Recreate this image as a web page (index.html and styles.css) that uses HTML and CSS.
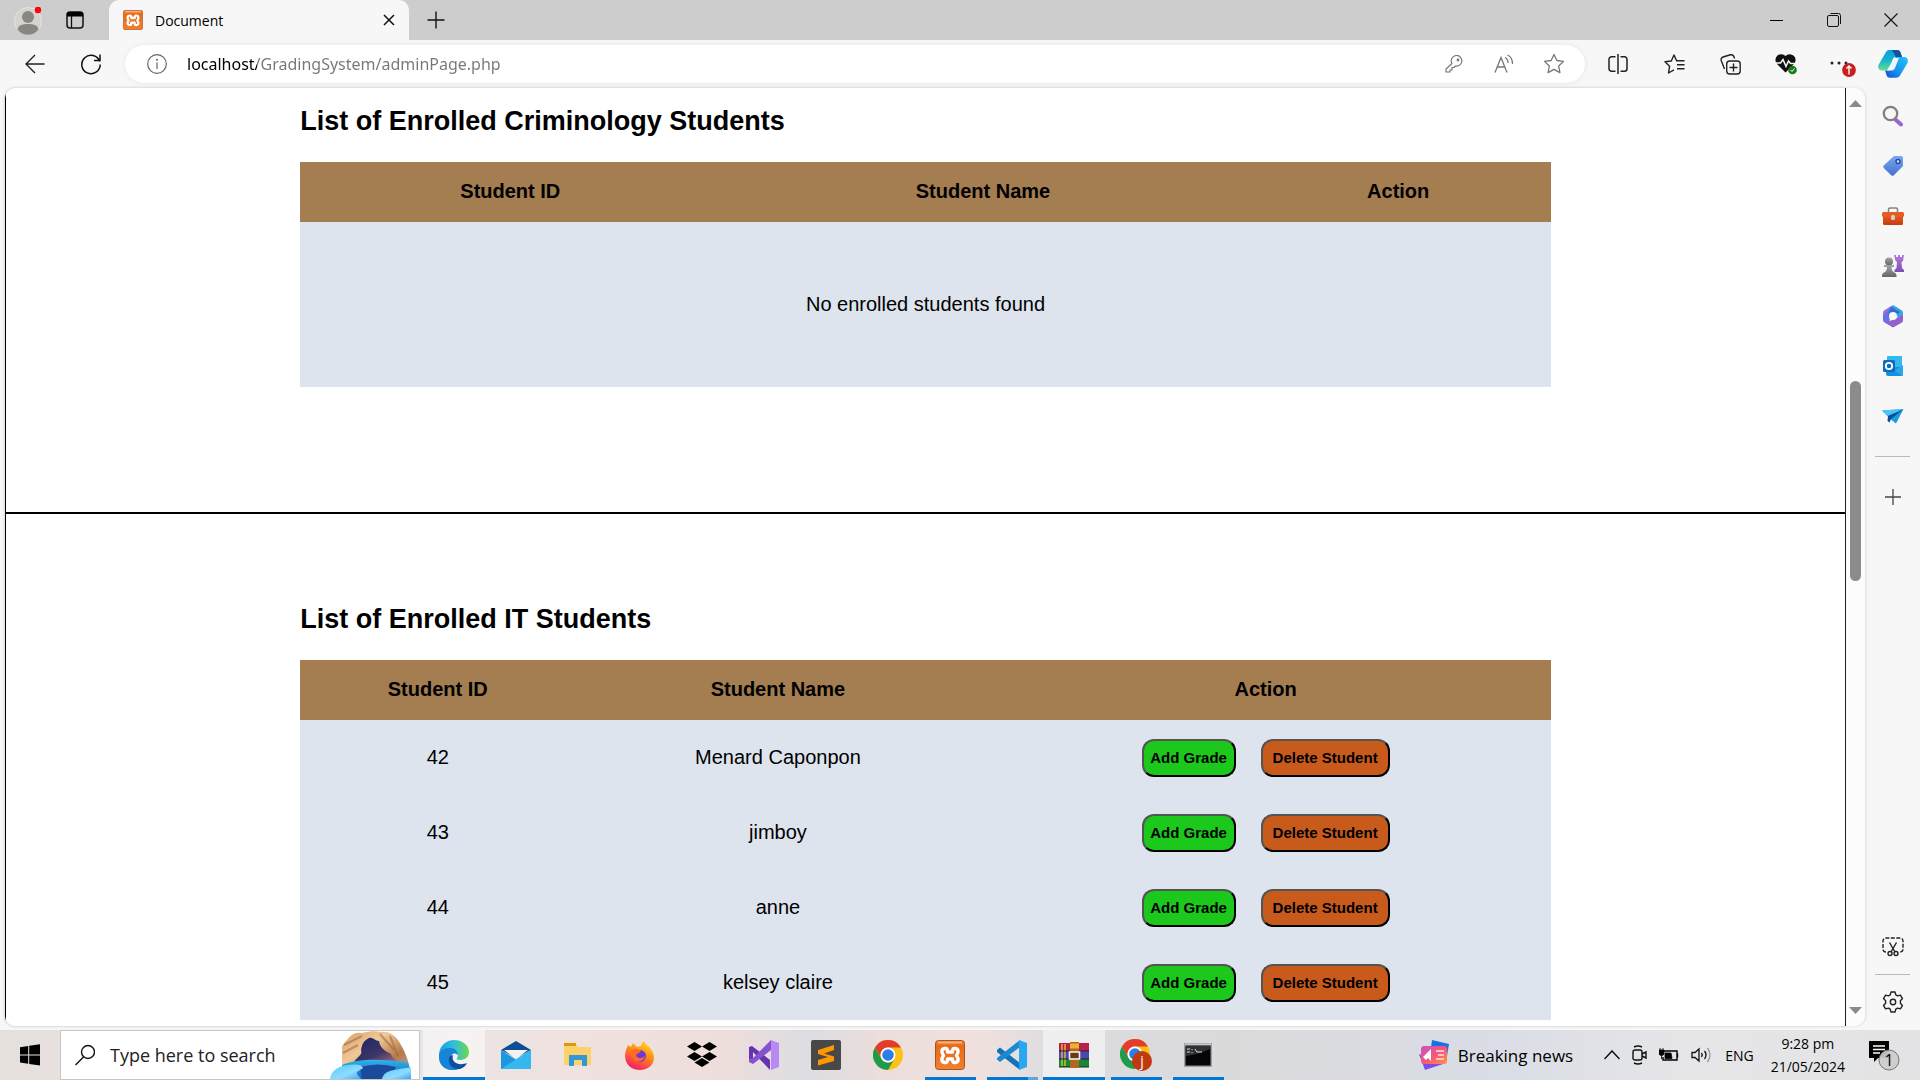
FILE: index.html
```html
<!DOCTYPE html>
<html lang="en">
<head>
<meta charset="utf-8">
<title>Document</title>
<link rel="stylesheet" href="styles.css">
</head>
<body>
<svg class="defs" aria-hidden="true">
  <defs>
    <linearGradient id="g-blue" x1="0" y1="0" x2="1" y2="1"><stop offset="0" stop-color="#35c1f1"/><stop offset="1" stop-color="#0a6fd0"/></linearGradient>
    <linearGradient id="g-edge" x1="0" y1="0" x2="1" y2="0"><stop offset="0" stop-color="#1b9de2"/><stop offset=".5" stop-color="#2fc0d8"/><stop offset="1" stop-color="#6ad94a"/></linearGradient>
    <linearGradient id="g-orange" x1="0" y1="0" x2="0" y2="1"><stop offset="0" stop-color="#f08030"/><stop offset=".2" stop-color="#ea6a16"/><stop offset="1" stop-color="#f08030"/></linearGradient>
    <linearGradient id="g-purple" x1="0" y1="0" x2="0" y2="1"><stop offset="0" stop-color="#b77be0"/><stop offset="1" stop-color="#7a4fb5"/></linearGradient>
    <linearGradient id="g-grey" x1="0" y1="0" x2="0" y2="1"><stop offset="0" stop-color="#a5a5a5"/><stop offset="1" stop-color="#666"/></linearGradient>
    <linearGradient id="g-tag" x1="0" y1="0" x2="0" y2="1"><stop offset="0" stop-color="#79aaf0"/><stop offset="1" stop-color="#4470cf"/></linearGradient>
    <linearGradient id="g-tool" x1="0" y1="0" x2="0" y2="1"><stop offset="0" stop-color="#f0662a"/><stop offset="1" stop-color="#c43c10"/></linearGradient>
    <linearGradient id="g-fox" x1=".8" y1="0" x2=".3" y2="1"><stop offset="0" stop-color="#ffe226"/><stop offset=".45" stop-color="#ff8a16"/><stop offset="1" stop-color="#f5156c"/></linearGradient>
    <linearGradient id="g-news" x1="0" y1="0" x2="1" y2="1"><stop offset="0" stop-color="#c455c8"/><stop offset=".5" stop-color="#f5567b"/><stop offset="1" stop-color="#ff9145"/></linearGradient>
    <linearGradient id="g-cop1" x1="0" y1="0" x2="0" y2="1"><stop offset="0" stop-color="#0d9de0"/><stop offset=".5" stop-color="#19b3cf"/><stop offset="1" stop-color="#66dc8c"/></linearGradient>
    <linearGradient id="g-cop2" x1="1" y1="0" x2="0" y2="1"><stop offset="0" stop-color="#27c3f5"/><stop offset=".6" stop-color="#168ff0"/><stop offset="1" stop-color="#1546d0"/></linearGradient>
    <linearGradient id="g-canyon" x1="0" y1="0" x2="1" y2="1"><stop offset="0" stop-color="#d9a066"/><stop offset=".35" stop-color="#f0c899"/><stop offset=".65" stop-color="#b87a46"/><stop offset="1" stop-color="#8ab0e8"/></linearGradient>
    <linearGradient id="g-cave" x1="0" y1="0" x2="1" y2="1"><stop offset="0" stop-color="#1b2566"/><stop offset=".6" stop-color="#3d3566"/><stop offset="1" stop-color="#a07080"/></linearGradient>
    <linearGradient id="g-water" x1="0" y1="0" x2="0" y2="1"><stop offset="0" stop-color="#2fb4ea"/><stop offset="1" stop-color="#1763b8"/></linearGradient>
    <linearGradient id="g-ice" x1="0" y1="0" x2="1" y2="1"><stop offset="0" stop-color="#52c8fa"/><stop offset=".6" stop-color="#8edcff"/><stop offset="1" stop-color="#3aa5ee"/></linearGradient>
    <symbol id="xampp" viewBox="0 0 30 30">
      <rect x=".5" y=".5" width="29" height="29" rx="3" fill="url(#g-orange)" stroke="#a8551c"/>
      <path d="M3 2.500h24" stroke="#f5b183" stroke-width="2"/>
      <path d="M9.500 8.500C12 8 12.500 9 12.500 12H17.500C17.500 9 18 8 20.500 8.500C23.500 9 24 12 21.500 15.500C24 19 23.500 22 20.500 22.500C18 23 17.500 22 17.500 19H12.500C12.500 22 12 23 9.500 22.500C6.500 22 6 19 8.500 15.500C6 12 6.500 9 9.500 8.500z" fill="none" stroke="#fff" stroke-width="3.400" stroke-linejoin="round"/>
    </symbol>
    <symbol id="chrome" viewBox="0 0 30 30">
      <circle cx="15" cy="15" r="15" fill="#fbc116"/>
      <path d="M2 7.500A15 15 0 0 1 28 7.500H15A7.500 7.500 0 0 0 8.500 18.800z" fill="#e33b2e"/>
      <path d="M2 7.500 8.500 18.700A7.500 7.500 0 0 0 21.500 18.800L15 30A15 15 0 0 1 2 7.500z" fill="#229a4c"/>
      <circle cx="15" cy="15" r="7.500" fill="#fff"/><circle cx="15" cy="15" r="5.800" fill="#2b7de9"/>
    </symbol>
  </defs>
</svg>

<header class="tabbar">
  <button class="avatar" aria-label="Profile">
    <svg width="28" height="30" viewBox="0 0 28 30"><circle cx="14" cy="16" r="13.500" fill="#d5d3cf" stroke="#e6e4e0"/><circle cx="14" cy="12" r="6" fill="#8a8682"/><path d="M3.500 24.500C4 20.500 8 19 14 19s10 1.500 10.500 5.500A13 13 0 0 1 3.500 24.500z" fill="#8a8682"/><circle cx="24" cy="5" r="4" fill="#e81010" stroke="#f3dada"/></svg>
  </button>
  <button class="workspaces" aria-label="Tab actions">
    <svg width="18" height="18" viewBox="0 0 18 18"><rect x="1" y="1" width="16" height="16" rx="3" fill="none" stroke="#111" stroke-width="1.500"/><path d="M1 5.500V3a2 2 0 0 1 2-2h12a2 2 0 0 1 2 2v2.500z"/><path d="M5.500 5v12" stroke="#111" stroke-width="1.300"/></svg>
  </button>
  <div class="tab">
    <svg width="20" height="20"><use href="#xampp"/></svg>
    <span class="tab-title">Document</span>
    <button aria-label="Close tab"><svg width="12" height="12" viewBox="0 0 12 12"><path d="M1 1l10 10M11 1 1 11" stroke="#111" stroke-width="1.500"/></svg></button>
  </div>
  <button class="new-tab" aria-label="New tab"><svg width="18" height="18" viewBox="0 0 18 18"><path d="M9 .5v17M.5 9h17" stroke="#111" stroke-width="1.400"/></svg></button>
  <div class="window-controls">
    <button aria-label="Minimize"><svg width="13" height="13" viewBox="0 0 13 13"><path d="M0 6.500h13" stroke="#000"/></svg></button>
    <button aria-label="Restore"><svg width="14" height="14" viewBox="0 0 14 14" fill="none" stroke="#111"><rect x=".5" y="2.500" width="11" height="11" rx="1.500"/><path d="M3.500.5h8a2 2 0 0 1 2 2v8.500"/></svg></button>
    <button aria-label="Close"><svg width="14" height="14" viewBox="0 0 14 14"><path d="M.5.5l13 13M13.500.5l-13 13" stroke="#111" stroke-width="1.100"/></svg></button>
  </div>
</header>

<nav class="toolbar">
  <button aria-label="Back"><svg width="20" height="20" viewBox="0 0 20 20" fill="none" stroke="#222" stroke-width="1.400"><path d="M19.500 10H1M10 1 1 10l9 9"/></svg></button>
  <button aria-label="Refresh"><svg width="20" height="22" viewBox="0 0 20 22" fill="none" stroke="#111" stroke-width="1.500"><path d="M18.700 8.500A9.200 9.200 0 1 0 19.200 11.500M19 1.500v6h-6"/></svg></button>
  <div class="omnibox">
    <svg class="info" width="20" height="22" viewBox="0 0 20 22"><circle cx="10" cy="11" r="9.300" fill="none" stroke="#666" stroke-width="1.200"/><path d="M10 9.500v6.500" stroke="#666" stroke-width="1.200"/><circle cx="10" cy="6.800" r="1" fill="#666"/></svg>
    <input class="url" type="text" aria-label="Address" value="localhost/GradingSystem/adminPage.php">
    <button aria-label="Saved passwords"><svg width="18" height="18" viewBox="0 0 18 18" fill="none" stroke="#767676" stroke-width="1.200"><path d="M7 8.500A5.300 5.300 0 1 1 10.500 11L9 12.500H7V15H5v2H1v-3z" stroke-linejoin="round"/><circle cx="13" cy="5" r=".8" fill="#767676"/></svg></button>
    <button aria-label="Read aloud"><svg width="20" height="20" viewBox="0 0 20 20" fill="none" stroke="#767676" stroke-width="1.300"><path d="M1 18.500 7 3.500l6 15M3 13h8M11 3.500c2 1 3 3 3 5.500M13.500 1c3.500 1.500 5 5 5 9"/></svg></button>
    <button aria-label="Add to favorites"><svg width="22" height="22" viewBox="0 0 22 22" fill="none" stroke="#767676" stroke-width="1.300" stroke-linejoin="round"><path d="M11 1.500l2.900 6 6.600.9-4.800 4.600 1.200 6.600-5.900-3.200-5.900 3.200 1.200-6.600L1.500 8.400l6.600-.9z"/></svg></button>
  </div>
  <button aria-label="Split screen"><svg width="20" height="20" viewBox="0 0 20 20" fill="none" stroke="#222" stroke-width="1.500"><path d="M7.500 2.700H3.500a2.500 2.500 0 0 0-2.500 2.500v9.600a2.500 2.500 0 0 0 2.500 2.500h4M12.500 2.700h4A2.500 2.500 0 0 1 19 5.200v9.600a2.500 2.500 0 0 1-2.500 2.500h-4M10 0v20"/></svg></button>
  <button aria-label="Favorites"><svg width="21" height="20" viewBox="0 0 21 20" fill="none" stroke="#222" stroke-width="1.400" stroke-linejoin="round"><path d="M12.500 6.500 10 1 7.300 7 1 7.800l4.600 4.500L4.500 19l5.500-3.200M12 6.700h8.500M13 10.700h7.500M13 14.700h7.500"/></svg></button>
  <button aria-label="Collections"><svg width="21" height="21" viewBox="0 0 21 21" fill="none" stroke="#222" stroke-width="1.400"><rect x="6.700" y="7" width="13.500" height="13" rx="3"/><path d="M13.500 9.500v8M9.500 13.500h8M4.500 15 1.200 6.500A3 3 0 0 1 3 3l7.500-2.200a3 3 0 0 1 3.500 2L14.500 4.500"/></svg></button>
  <button aria-label="Browser essentials"><svg width="22" height="22" viewBox="0 0 22 22"><path d="M10.500 19.500 2 11A5.500 5.500 0 0 1 10.500 3a5.500 5.500 0 0 1 8.500 8z" fill="#111"/><path d="M.5 10h5L8 6.500l3 7L13.500 8l2 2.500H21" fill="none" stroke="#f7f7f7" stroke-width="1.500"/><circle cx="17.500" cy="17" r="4.300" fill="#177a17"/><path d="M15.500 17l1.500 1.500 2.500-3" fill="none" stroke="#fff"/></svg></button>
  <button aria-label="Settings and more"><svg width="28" height="26" viewBox="0 0 28 26"><g fill="#222"><circle cx="4" cy="12" r="1.500"/><circle cx="11" cy="12" r="1.500"/><circle cx="18" cy="12" r="1.500"/></g><circle cx="21" cy="19" r="6.900" fill="#c8201f"/><path d="M21 23.500v-8M18.500 17.500 21 15l2.500 2.500" fill="none" stroke="#fff" stroke-width="1.400"/></svg></button>
  <button class="copilot" aria-label="Copilot"><svg width="30" height="28" viewBox="0 0 30 28"><path d="M8 2c1-1.500 2-2 4-2h7c2 0 3 1 3.500 2.500L24 7h-6c-2 0-3 1-3.500 3l-2 7c-1 3-2 3.500-4 3.500H4C1 20.500-.5 18 .5 15z" fill="url(#g-cop1)"/><path d="M14 0h5c2 0 3 1 3.500 2.500L24 7h-6z" fill="#16529a"/><path d="M22 25.500c-1 1.800-2 2.200-4 2.200h-6c-2 0-3-1-3.500-2.700L7 20.500h3c2 0 3-1 3.500-3l2-7.500c1-2.500 2-3 4-3H26c3.500 0 4.500 2.500 3.500 6z" fill="url(#g-cop2)"/><path d="M16 8h5l-4 10c-1 2-2 2.500-4 2.500h-4z" fill="#fff" opacity=".9"/></svg></button>
</nav>

<div class="browser-body">
  <main class="page">
    <section class="course course-first">
      <h2>List of Enrolled Criminology Students</h2>
      <table class="students criminology">
        <thead><tr><th>Student ID</th><th>Student Name</th><th>Action</th></tr></thead>
        <tbody><tr class="empty"><td colspan="3">No enrolled students found</td></tr></tbody>
      </table>
    </section>
    <section class="course">
      <h2>List of Enrolled IT Students</h2>
      <table class="students it">
        <thead><tr><th>Student ID</th><th>Student Name</th><th>Action</th></tr></thead>
        <tbody>
          <tr><td>42</td><td>Menard Caponpon</td><td><div class="actions"><button class="add">Add Grade</button><button class="delete">Delete Student</button></div></td></tr>
          <tr><td>43</td><td>jimboy</td><td><div class="actions"><button class="add">Add Grade</button><button class="delete">Delete Student</button></div></td></tr>
          <tr><td>44</td><td>anne</td><td><div class="actions"><button class="add">Add Grade</button><button class="delete">Delete Student</button></div></td></tr>
          <tr><td>45</td><td>kelsey claire</td><td><div class="actions"><button class="add">Add Grade</button><button class="delete">Delete Student</button></div></td></tr>
        </tbody>
      </table>
    </section>
  </main>
  <div class="scrollbar">
    <svg width="13" height="7" viewBox="0 0 13 7"><path d="M6.500 0 13 7H0z" fill="#8b8b8b"/></svg>
    <div class="track"><div class="thumb"></div></div>
    <svg width="13" height="7" viewBox="0 0 13 7"><path d="M0 0h13L6.500 7z" fill="#8b8b8b"/></svg>
  </div>
  <aside class="sidebar">
    <button aria-label="Search"><svg width="22" height="22" viewBox="0 0 22 22"><path d="M14 15l5 4.500" stroke="#9a64cf" stroke-width="4" stroke-linecap="round"/><circle cx="8.500" cy="8.500" r="6.700" fill="none" stroke="#808080" stroke-width="2.300"/></svg></button>
    <button aria-label="Shopping"><svg width="22" height="22" viewBox="0 0 22 22"><path d="M12 1h7a2 2 0 0 1 2 2v8l-9 9a2 2 0 0 1-3 0L1.700 13a2 2 0 0 1 0-2.500z" fill="url(#g-tag)"/><circle cx="16" cy="6.500" r="2" fill="#cfe0ff" stroke="#2a4690" stroke-width="1.400"/></svg></button>
    <button aria-label="Tools"><svg width="22" height="20" viewBox="0 0 22 20"><path d="M6.500 7V3.500a1.500 1.500 0 0 1 1.500-1.500h6a1.500 1.500 0 0 1 1.500 1.500V7" fill="none" stroke="#858585" stroke-width="1.600"/><rect x="1" y="6" width="20" height="13" rx="1.500" fill="url(#g-tool)"/><rect x="0" y="6" width="22" height="5" rx="1.500" fill="#e85c22"/><rect x="9" y="9" width="4" height="5" rx="1.500" fill="#d0d0d0"/></svg></button>
    <button aria-label="Games"><svg width="22" height="24" viewBox="0 0 22 24"><path d="M12 1h2v2h2V1h2v2h2V1h2l-1 6-1.500 1 .5 6 2 2v2h-9.500v-2l2-2 .5-6-1.500-1z" fill="url(#g-purple)"/><g fill="url(#g-grey)"><circle cx="7" cy="7.500" r="4"/><path d="M2 11h10v2H9.500c0 3 1 4.500 3 5.500 2 1 2 2 2 4.500H0c0-2.500 0-3.500 2-4.500s3-2.500 3-5.500H2z"/></g></svg></button>
    <button aria-label="Microsoft 365"><svg width="22" height="24" viewBox="0 0 22 24"><path d="M10 1.500q1-.7 2 0L20 6.500q1 1 1 2V15l-7-3-4-6z" fill="#38a4ea"/><path d="M10 1.500 2 6.500q-1 1-1 2v7q0 1.500 1 2.500l5 3V11z" fill="#9b72dc"/><path d="M10 1.500 8 7v10l-1 4-5-3q-1-1-1-2.500V12z" fill="#4a6fe0" opacity=".6"/><path d="M9 2.500 18 8l-4 3-8 1z" fill="#2f6fd4"/><path d="M21 11v5.500q0 1-1 2l-8 4.500q-1 .5-2 0L4 19l10-5z" fill="#9261cf"/><circle cx="11" cy="12" r="4" fill="#f7f7f7"/></svg></button>
    <button aria-label="Outlook"><svg width="22" height="22" viewBox="0 0 22 22"><rect x="5" y="1" width="15" height="12" rx="1" fill="#35b8f1"/><path d="M4 12h17v7a2 2 0 0 1-2 2H6a2 2 0 0 1-2-2z" fill="#1490df"/><path d="m21 10-9 6 9 5z" fill="#28a8ea"/><rect x="1" y="5" width="12" height="12" rx="1.500" fill="#0f6cbd"/><circle cx="7" cy="11" r="3.200" fill="none" stroke="#fff" stroke-width="1.800"/></svg></button>
    <button aria-label="Drop"><svg width="22" height="18" viewBox="0 0 22 18"><path d="M0 3.500 21.500 2 14 16.500l-5-4z" fill="#1c9be0"/><path d="M0 3.500 21.500 2 6 9z" fill="#4cc4f5"/><path d="M6 9l15-6.500L9 12l-1.500 3.500L5.500 14z" fill="#0a4e94"/></svg></button>
    <hr>
    <button aria-label="Customize"><svg width="16" height="16" viewBox="0 0 16 16"><path d="M8 0v16M0 8h16" stroke="#444" stroke-width="1.300"/></svg></button>
    <div class="sidebar-bottom">
      <button aria-label="Screenshot"><svg width="22" height="20" viewBox="0 0 22 20" fill="none" stroke="#222" stroke-width="1.400"><path d="M4 15a3 3 0 0 1-3-3V4a3 3 0 0 1 3-3h14a3 3 0 0 1 3 3v8a3 3 0 0 1-3 3" stroke-dasharray="4 1.500"/><path d="M7.500 5.500l5.500 9.500M14.500 5.500 9 15"/><circle cx="8" cy="16.500" r="2"/><circle cx="14" cy="16.500" r="2"/></svg></button>
      <hr>
      <button aria-label="Settings"><svg width="22" height="22" viewBox="0 0 22 22" fill="none" stroke="#222" stroke-width="1.400" stroke-linejoin="round"><path d="M9 1h4l.8 2.900 1.700 1 2.900-.8 2.100 3.500L18.400 9.800v2.400l2.100 2.200-2.100 3.500-2.900-.8-1.700 1L13 21H9l-.8-2.900-1.700-1-2.900.8-2.100-3.500 2.100-2.200V9.800L1.500 7.600l2.100-3.500 2.900.8 1.700-1z"/><circle cx="11" cy="11" r="2.700"/></svg></button>
    </div>
  </aside>
</div>

<footer class="taskbar">
  <button class="start" aria-label="Start"><svg width="20" height="22" viewBox="0 0 20 22"><path d="M0 3.200 8.200 2v8.400H0zM9.200 1.800 20 .3v10.100H9.200zM0 11.400h8.200v8.400L0 18.600zM9.200 11.400H20v10.100L9.200 20z"/></svg></button>
  <label class="search">
    <svg width="20" height="22" viewBox="0 0 20 22" fill="none" stroke="#111" stroke-width="1.400"><circle cx="13" cy="8" r="6.500"/><path d="M8.500 13 .5 21"/></svg>
    <input type="text" placeholder="Type here to search" aria-label="Search">
    <svg class="scene" width="82" height="48" viewBox="0 0 82 48"><path d="M12 40V15C18 8 22 0 32 2c8-2 14-2 20-1 8-1 12 4 16 8 5 8 10 17 12 30v9H12z" fill="url(#g-canyon)"/><path d="M14 14l18-9M13 22l15-8M50 3l14 16M60 5l8 20" stroke="#8f6038" stroke-width="2" opacity=".5"/><path d="M24 31c3-5 9-7 7-12 1-5 2-9 8-12 4-1 6 3 10 3 1 7 6 10 12 13 0 3 4 5 7 8z" fill="url(#g-cave)"/><path d="M12 34c14-6 40-7 66-2l3 8v8H12z" fill="url(#g-water)"/><path d="M30 36q18-5 36 0l-6 12H32z" fill="#1b4a9c"/><path d="M0 48c1-8 8-13 18-14 7-1 14-1 15 3-2 2-7 3-6 6l4 5z" fill="url(#g-ice)"/><path d="M52 48c1-5 5-8 12-9 8-1 13-3 17-2v11z" fill="url(#g-ice)"/></svg>
  </label>
  <div class="apps">
    <button class="running active" aria-label="Edge"><svg width="30" height="30" viewBox="0 0 30 30"><path d="M0 14C1 4 9 0 15 0c9 0 15 6 15 12 0 6-5 8-9 8-3 0-4-1-3-2 3-5-1-9-6-9C7 9 2 12 0 14z" fill="url(#g-edge)"/><path d="M0 14C3 9 7 8 11 8c5 0 8 3 8 7-4-4-9 0-7 6 1 4 4 7 8 8-2 1-5 1-8 1C3 29-1 22 0 14z" fill="#1685d8"/><path d="M11 16c-4 7 2 14 10 13 3-1 6-3 7-6-3 1-7 2-11 0-3-2-4-4-3-8z" fill="#0c4fa0"/></svg></button>
    <button aria-label="Mail"><svg width="30" height="30" viewBox="0 0 30 30"><path d="M0 10 15 1l15 9-15 8z" fill="#0d4f96"/><path d="M3 10h24l-12 9z" fill="#f2f2f2"/><path d="M0 10l15 9.500L30 10v19H0z" fill="#1e96e0"/><path d="M0 29 30 10v19z" fill="#35b8f0"/></svg></button>
    <button aria-label="File Explorer"><svg width="28" height="26" viewBox="0 0 28 26"><path d="M0 2h12l2 3h13v18H0z" fill="#fdd16a"/><path d="M0 1h12v3H0z" fill="#dd9a08"/><path d="M5 24V13h18v11h-5v-6h-8v6z" fill="#3498d8"/></svg></button>
    <button aria-label="Firefox"><svg width="30" height="30" viewBox="0 0 30 30"><path d="M1 10 3 5l3 2 2-4 4 4c2-1 4-1 4-1 0-2 1-4 3-5 1 4 9 6 10 16 0 8-6 13-14 13S-3 24 1 10z" fill="url(#g-fox)"/><circle cx="15" cy="16" r="6" fill="#7038d0"/><path d="M6 10c4-1 7-1 10 1-1 2-3 2-5 4 1 4 6 4 9 1-1 6-10 8-13 1z" fill="#ff6b22"/></svg></button>
    <button aria-label="Dropbox"><svg width="30" height="28" viewBox="0 0 30 28"><path d="M7.500 1 15 5.500 7.500 10 0 5.500zM22.500 1 30 5.500 22.500 10 15 5.500zM7.500 11l7.500 4.500L7.500 20 0 15.500zM22.500 11l7.500 4.500-7.500 4.500-7.500-4.500zM15 17l7.500 4.500L15 26l-7.500-4.500z"/></svg></button>
    <button aria-label="Visual Studio"><svg width="30" height="30" viewBox="0 0 30 30"><path d="M0 7l3-1 18 14v-5 15L4 12v7l-4 3z" fill="#6633b0"/><path d="M22 0v10L4 24l-4-2V19l4-1z" fill="#8652cf"/><path d="M22 0 30 3v24l-8 3z" fill="#b889f2"/></svg></button>
    <button aria-label="Sublime Text"><svg width="30" height="30" viewBox="0 0 30 30"><rect width="30" height="30" rx="2" fill="#484848"/><path d="M7 10 23 5v5l-10 3.500 10 3V21L7 25.500V20l10-3-10-3z" fill="#ff9800"/></svg></button>
    <button aria-label="Chrome"><svg width="30" height="30"><use href="#chrome"/></svg></button>
    <button class="running" aria-label="XAMPP"><svg width="30" height="30"><use href="#xampp"/></svg></button>
    <button class="running stacked" aria-label="Visual Studio Code"><svg width="30" height="30" viewBox="0 0 30 30"><path d="M0 10l3-2.500L23 23v7L0 12z" fill="#1273b8"/><path d="M0 19.500 3 22 23 7V0L0 18z" fill="#1c8ad0"/><path d="M22 0l8 3v24l-8 3z" fill="#28a8f0"/></svg></button>
    <button class="running hot" aria-label="WinRAR"><svg width="30" height="26" viewBox="0 0 30 26"><rect y="1" width="30" height="8" fill="#b8204a"/><rect y="9" width="30" height="8" fill="#4a48b0"/><rect y="17" width="30" height="8" fill="#148838"/><path d="M3 2v22M6 2v22" stroke="#e8c830" stroke-width="1.300"/><path d="M0 9h30M0 17h30M0 25h30" stroke="#222"/><rect x="11" width="9" height="26" fill="#b3671e"/><path d="M11 4h9" stroke="#f0b030" stroke-width="5"/><rect x="10.500" y="10" width="10" height="7" fill="#6b3b12" stroke="#eee" stroke-width="1.600"/></svg></button>
    <button class="running" aria-label="Chrome profile"><svg width="32" height="32" viewBox="0 0 32 32"><use href="#chrome" width="30" height="30"/><circle cx="22" cy="22" r="10" fill="#c0390f"/><text class="profile-letter" x="22" y="27" text-anchor="middle">j</text></svg></button>
    <button class="running" aria-label="Command Prompt"><svg width="28" height="24" viewBox="0 0 28 24"><rect x=".7" y=".7" width="26.600" height="22.600" fill="#050505" stroke="#9aa0a8" stroke-width="1.500"/><path d="M1 1.500h26" stroke="#c4c8cf" stroke-width="2"/><path d="M2 13Q12 12 26 6V3H2z" fill="#444" opacity=".7"/><path d="M3 6h3M3 9h3M8 6v1M8 9v1M11 6l2 3M13 9h5" stroke="#ddd"/></svg></button>
  </div>
  <div class="tray">
    <button class="news"><svg width="30" height="30" viewBox="0 0 30 30"><path d="M13 0 30 4l-3 18H10z" fill="#1673df"/><path d="M0 14l24 10-18 6z" fill="#7c4be8"/><rect x="2" y="6" width="26" height="18" rx="3" fill="url(#g-news)"/><path d="M4 17 12 9v12l-3-3-2 2z" fill="#fff"/><path d="M17 11h8M19 15h6M17 19h8" stroke="#ffe0e0" stroke-width="1.600"/></svg>Breaking news</button>
    <div class="tray-icons">
      <svg width="16" height="10" viewBox="0 0 16 10"><path d="M.5 9 8 1l7.500 8" fill="none" stroke="#111" stroke-width="1.500"/></svg>
      <svg width="15" height="20" viewBox="0 0 15 20" fill="none" stroke="#111" stroke-width="1.400"><rect x="1" y="5" width="9" height="10" rx="2"/><path d="M10 9l4-2v6l-4-2M2 2q4-2 8 0M2 18q4 2 8 0"/></svg>
      <svg width="20" height="14" viewBox="0 0 20 14"><path d="M5 3h13v9H4V9M18.500 5.500v4" fill="none" stroke="#000" stroke-width="1.400"/><path d="M6 5h6l1 5.500H6zM0 2h5v3a2.500 2.500 0 0 1-5 0zM1 0v2M4 0v2M2.500 6v5" stroke="#000" stroke-width=".8"/></svg>
      <svg width="22" height="18" viewBox="0 0 22 18" fill="none" stroke="#111" stroke-width="1.300"><path d="M1 6.500h3L8 3v12l-4-3.500H1zM10.500 7q1.500 2 0 4M13.500 5q3 4 0 8"/><path d="M16.500 2q5 7 0 14" stroke="#999"/></svg>
      <span>ENG</span>
    </div>
    <div class="clock"><time>9:28 pm</time><time>21/05/2024</time></div>
    <button class="notifications" aria-label="Notifications"><svg width="32" height="32" viewBox="0 0 32 32"><path d="M1 2h20v17H10l-4 4v-4H1z"/><path d="M5 7h12M5 10.500h12M5 14h7" stroke="#fff" stroke-width="1.400"/><circle cx="21" cy="21" r="10" fill="#ccc" fill-opacity=".92" stroke="#777"/><text class="count" x="21" y="27" text-anchor="middle">1</text></svg></button>
  </div>
</footer>
</body>
</html>
```
FILE: styles.css
```css
* {
  box-sizing: border-box;
}

body {
  margin: 0;
  height: 100vh;
  display: flex;
  flex-direction: column;
  overflow: hidden;
  background: #f7f7f7;
  color: #000;
  font-family: "Open Sans", "Noto Sans", sans-serif;
}

button {
  padding: 0;
  border: 0;
  background: none;
  color: inherit;
  font: inherit;
}

svg {
  display: block;
  flex: none;
}

.defs {
  position: absolute;
  width: 0;
  height: 0;
}

/* Tab strip */
.tabbar {
  flex: none;
  display: flex;
  align-items: center;
  height: 40px;
  background: #cdcdcd;
}

.tabbar button,
.toolbar button,
.sidebar button,
.apps button {
  display: grid;
  place-items: center;
}

.avatar {
  width: 56px;
}

.workspaces {
  width: 38px;
}

.tab {
  display: flex;
  align-items: center;
  width: 300px;
  height: 40px;
  margin-left: 15px;
  padding: 0 8px 0 14px;
  gap: 12px;
  border-radius: 10px 10px 0 0;
  background: #f7f7f7;
}

.tab-title {
  flex: 1;
  font-size: 14px;
}

.tab button {
  width: 24px;
  height: 24px;
}

.new-tab {
  width: 54px;
}

.window-controls {
  display: flex;
  margin-left: auto;
  padding-right: 1px;
}

.window-controls button {
  width: 57px;
  height: 40px;
}

/* Address row */
.toolbar {
  flex: none;
  display: flex;
  align-items: center;
  height: 48px;
  padding-left: 7px;
}

.toolbar > button {
  width: 56px;
  height: 40px;
}

.toolbar > .copilot {
  width: 50px;
  padding-right: 4px;
}

.omnibox {
  flex: 1;
  display: flex;
  align-items: center;
  height: 38px;
  margin: 0 5px 0 6px;
  padding: 0 6px 0 22px;
  border-radius: 19px;
  background: #fff;
  box-shadow: 0 0 4px #e4e4e4;
}

.omnibox button {
  width: 50px;
}

.url {
  flex: 1;
  margin-left: 20px;
  padding: 0;
  border: 0;
  font: 16px/24px "Noto Sans", "Open Sans", sans-serif;
  color: transparent;
  background: linear-gradient(to right, #000 70px, #767676 70px);
  -webkit-background-clip: text;
  background-clip: text;
}

/* Page area */
.browser-body {
  flex: 1;
  display: flex;
  min-height: 0;
  padding: 0 0 4px 5px;
}

.page {
  flex: 1;
  overflow: hidden;
  border-radius: 10px 0 0 10px;
  background: #fff;
  box-shadow: 0 0 3px #bbb;
}

.course {
  padding: 88px 0 125px;
  border: 1px solid #000;
}

.course-first {
  padding-top: 16px;
  border-top: 0;
}

.course h2 {
  width: 68%;
  margin: 0 auto 24px;
  font: bold 27px/34px "Liberation Sans", Arial, sans-serif;
}

.students {
  width: 68%;
  margin: 0 auto;
  table-layout: fixed;
  border-collapse: collapse;
  background: #dde4ed;
  font: 20px/24px "Liberation Sans", Arial, sans-serif;
  text-align: center;
}

.students th,
.students td {
  padding: 0 0 2px;
}

.students th {
  height: 60px;
  background: #a47d50;
}

.students td {
  height: 75px;
}

.students .empty td {
  height: 165px;
}

.it td:nth-child(3) {
  padding: 0;
}

.criminology th:nth-child(1) {
  width: 33.6%;
}

.criminology th:nth-child(2) {
  width: 42%;
}

.it th:nth-child(1) {
  width: 22%;
}

.it th:nth-child(2) {
  width: 32.4%;
}

.actions {
  display: flex;
  justify-content: center;
  gap: 25px;
}

.actions button {
  width: 94px;
  height: 38px;
  border: 2px outset #000;
  border-radius: 12px;
  font: bold 15px/20px "Liberation Sans", Arial, sans-serif;
  white-space: nowrap;
}

.actions .add {
  background: #1cc81c;
}

.actions .delete {
  width: 129px;
  background: #c85a1c;
}

.scrollbar {
  width: 19px;
  display: flex;
  flex-direction: column;
  align-items: center;
  padding: 12px 0;
  border-radius: 0 10px 10px 0;
  background: #fcfcfc;
  box-shadow: 1px 0 3px #ddd;
}

.track {
  flex: 1;
  width: 11px;
}

.thumb {
  height: 200px;
  margin-top: 274px;
  border-radius: 6px;
  background: #8b8b8b;
}

/* Edge sidebar */
.sidebar {
  width: 55px;
  display: flex;
  flex-direction: column;
  align-items: center;
  padding-top: 3px;
}

.sidebar button {
  width: 50px;
  height: 50px;
}

.sidebar hr {
  width: 35px;
  margin: 15px 0;
  border: 0;
  border-top: 1px solid #bbb;
}

.sidebar-bottom {
  margin-top: auto;
}

.sidebar-bottom button {
  height: 48px;
}

.sidebar-bottom hr {
  margin: 3px auto;
}

/* Taskbar */
.taskbar {
  flex: none;
  display: flex;
  height: 50px;
  background: linear-gradient(to right, #e6e0dd, #e9e5e4 22%, #f0e1de 31%, #eddedb 38%, #dcdce2 42%, #ecdedb 46%, #f0e1de 51%, #dcdce0 55%, #dadadb 64%, #dadde6 78%, #e6e6e8 88%, #e3e3e5);
}

.start {
  display: grid;
  place-items: center;
  width: 60px;
}

.search {
  display: flex;
  align-items: center;
  width: 360px;
  padding: 0 7px 0 14px;
  border: 1px solid #c6c6c6;
  background: #fff;
}

.search input {
  flex: 1;
  min-width: 0;
  margin-left: 15px;
  padding: 0;
  border: 0;
  background: none;
  font: 18px/24px "Open Sans", "Noto Sans", sans-serif;
}

.search input::placeholder {
  color: #222;
  opacity: 1;
}

.scene {
  align-self: flex-end;
}

.apps {
  display: flex;
  margin-left: 3px;
}

.apps button {
  width: 62px;
  background: linear-gradient(#0078d7, #0078d7) center bottom / 0 3px no-repeat;
}

.apps .running {
  background-size: 51px 3px;
}

.apps .active,
.apps .hot {
  background-color: rgba(255, 255, 255, .5);
  background-size: 100% 3px;
}

.apps .stacked {
  background-image: linear-gradient(to right, #0078d7 80%, #5ba6e4 80%);
}

.profile-letter {
  fill: #fff;
  font-size: 14px;
}

.tray {
  display: flex;
  align-items: center;
  margin-left: auto;
  padding-right: 20px;
}

.news {
  display: flex;
  align-items: center;
  gap: 9px;
  font-size: 17px;
}

.tray-icons {
  display: flex;
  align-items: center;
  gap: 12px;
  margin: 0 17px 0 31px;
  font-size: 14px;
}

.clock {
  display: flex;
  flex-direction: column;
  align-items: center;
  font-size: 14px;
  line-height: 23px;
}

.notifications {
  margin-left: 23px;
}

.count {
  font-size: 16px;
}
```
